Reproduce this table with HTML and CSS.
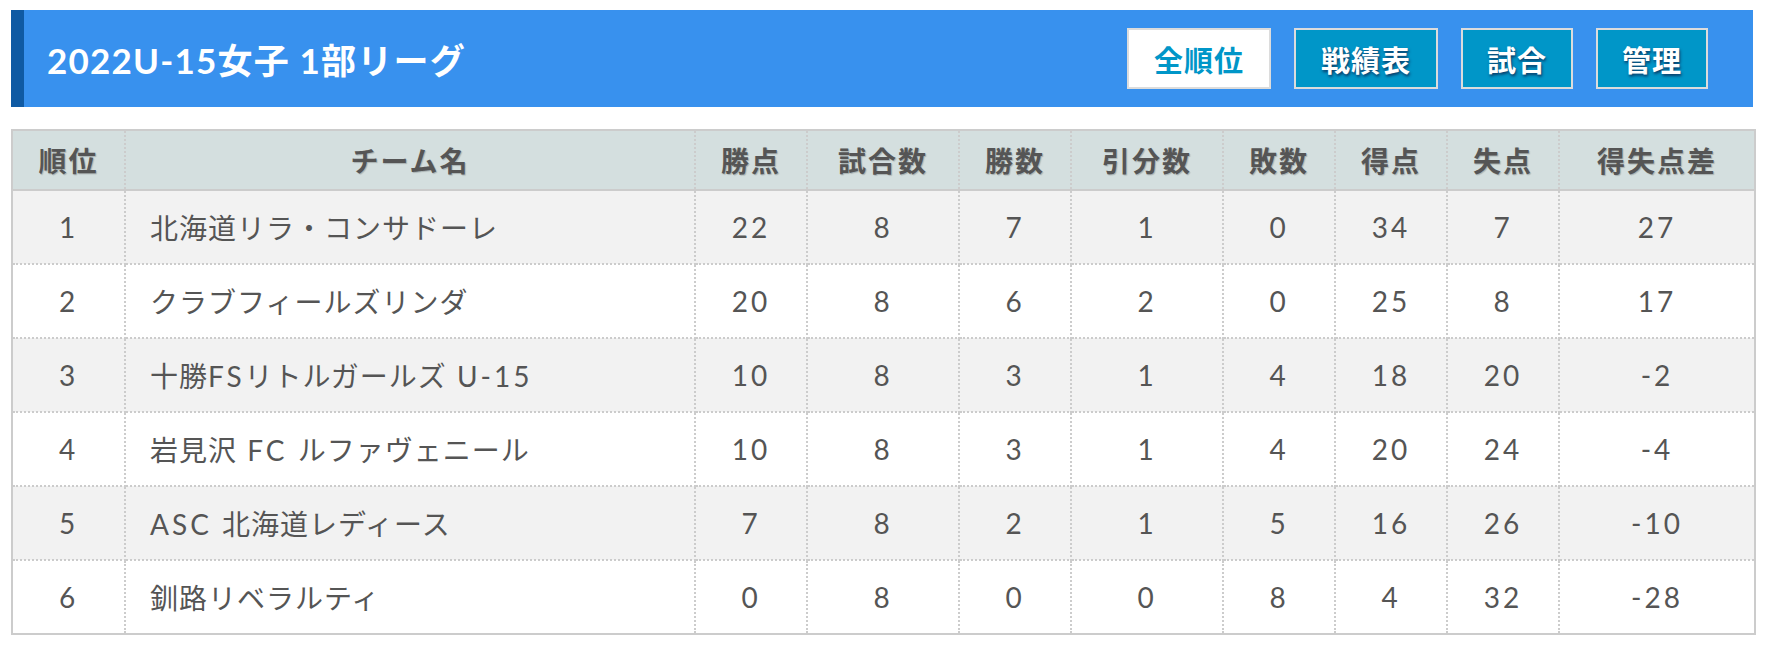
FILE: index.html
```html
<!DOCTYPE html>
<html lang="ja">
<head>
<meta charset="utf-8">
<title>2022U-15女子 1部リーグ</title>
<link rel="stylesheet" href="styles.css">
</head>
<body>
<div class="wrap">
  <header class="bar">
    <h1 class="title">2022U-15女子 1部リーグ</h1>
    <nav class="nav">
      <a class="btn btn-active btn-wide">全順位</a>
      <a class="btn btn-wide">戦績表</a>
      <a class="btn">試合</a>
      <a class="btn">管理</a>
    </nav>
  </header>
  <table class="standings">
    <colgroup>
      <col class="c-rank"><col class="c-team"><col class="c-s"><col class="c-m"><col class="c-s"><col class="c-m"><col class="c-s"><col class="c-s"><col class="c-s"><col class="c-l">
    </colgroup>
    <thead>
      <tr><th>順位</th><th>チーム名</th><th>勝点</th><th>試合数</th><th>勝数</th><th>引分数</th><th>敗数</th><th>得点</th><th>失点</th><th>得失点差</th></tr>
    </thead>
    <tbody>
      <tr><td>1</td><td class="team">北海道リラ・コンサドーレ</td><td>22</td><td>8</td><td>7</td><td>1</td><td>0</td><td>34</td><td>7</td><td>27</td></tr>
      <tr><td>2</td><td class="team">クラブフィールズリンダ</td><td>20</td><td>8</td><td>6</td><td>2</td><td>0</td><td>25</td><td>8</td><td>17</td></tr>
      <tr><td>3</td><td class="team">十勝<span class="lat">FS</span>リトルガールズ<span class="lat"> U-15</span></td><td>10</td><td>8</td><td>3</td><td>1</td><td>4</td><td>18</td><td>20</td><td>-2</td></tr>
      <tr><td>4</td><td class="team">岩見沢<span class="lat"> FC </span>ルファヴェニール</td><td>10</td><td>8</td><td>3</td><td>1</td><td>4</td><td>20</td><td>24</td><td>-4</td></tr>
      <tr><td>5</td><td class="team"><span class="lat">ASC </span>北海道レディース</td><td>7</td><td>8</td><td>2</td><td>1</td><td>5</td><td>16</td><td>26</td><td>-10</td></tr>
      <tr><td>6</td><td class="team">釧路リベラルティ</td><td>0</td><td>8</td><td>0</td><td>0</td><td>8</td><td>4</td><td>32</td><td>-28</td></tr>
    </tbody>
  </table>
</div>
</body>
</html>
```

FILE: styles.css
```css
html, body {
  margin: 0;
  padding: 0;
  background: #fff;
}

body {
  font-family: "Lato", "Noto Sans CJK JP", sans-serif;
  color: #555;
}

.wrap {
  padding: 10px 14px 0 11px;
}

.bar {
  display: flex;
  align-items: center;
  height: 97px;
  box-sizing: border-box;
  background: #3891ee;
  border-left: 13px solid #0f5aa3;
  padding: 0 45px 0 23px;
}

.title {
  margin: 0;
  font-size: 35px;
  font-weight: 700;
  letter-spacing: 1.2px;
  color: #fff;
}

.nav {
  margin-left: auto;
  display: flex;
  gap: 23px;
}

.btn {
  display: flex;
  align-items: center;
  justify-content: center;
  box-sizing: border-box;
  width: 112px;
  height: 61px;
  border: 2px solid #dcdcdc;
  background: #0096c8;
  color: #fff;
  font-size: 29px;
  font-weight: 700;
  letter-spacing: 1px;
  text-shadow: 1px 2px 3px #0b3a66;
  cursor: pointer;
}

.btn-wide {
  width: 144px;
}

.btn-active {
  background: #fff;
  color: #0096c8;
  text-shadow: none;
}

.standings {
  margin-top: 22px;
  width: 100%;
  border-collapse: collapse;
  border: 2px solid #ccc;
  table-layout: fixed;
}

.c-rank { width: 113px; }
.c-team { width: 570px; }
.c-s { width: 112px; }
.c-m { width: 152px; }
.c-l { width: 196px; }

.standings th,
.standings td {
  border: 2px dotted #ccc;
  text-align: center;
  padding: 0;
}

.standings thead tr {
  background: #d4dfdf;
  border-bottom: 2px solid #ccc;
}

.standings th {
  height: 58px;
  font-size: 28px;
  font-weight: 700;
  letter-spacing: 2px;
  color: #555;
  text-shadow: 1px 1px 1px rgba(0, 0, 0, 0.2);
}

.standings td {
  height: 72px;
  font-size: 28px;
  letter-spacing: 3px;
  color: #555;
}

.standings tbody tr:nth-child(odd) {
  background: #f2f2f2;
}

.standings td.team {
  text-align: left;
  padding-left: 24px;
  letter-spacing: 1px;
}

.standings td.team .lat {
  letter-spacing: 3px;
}
```
